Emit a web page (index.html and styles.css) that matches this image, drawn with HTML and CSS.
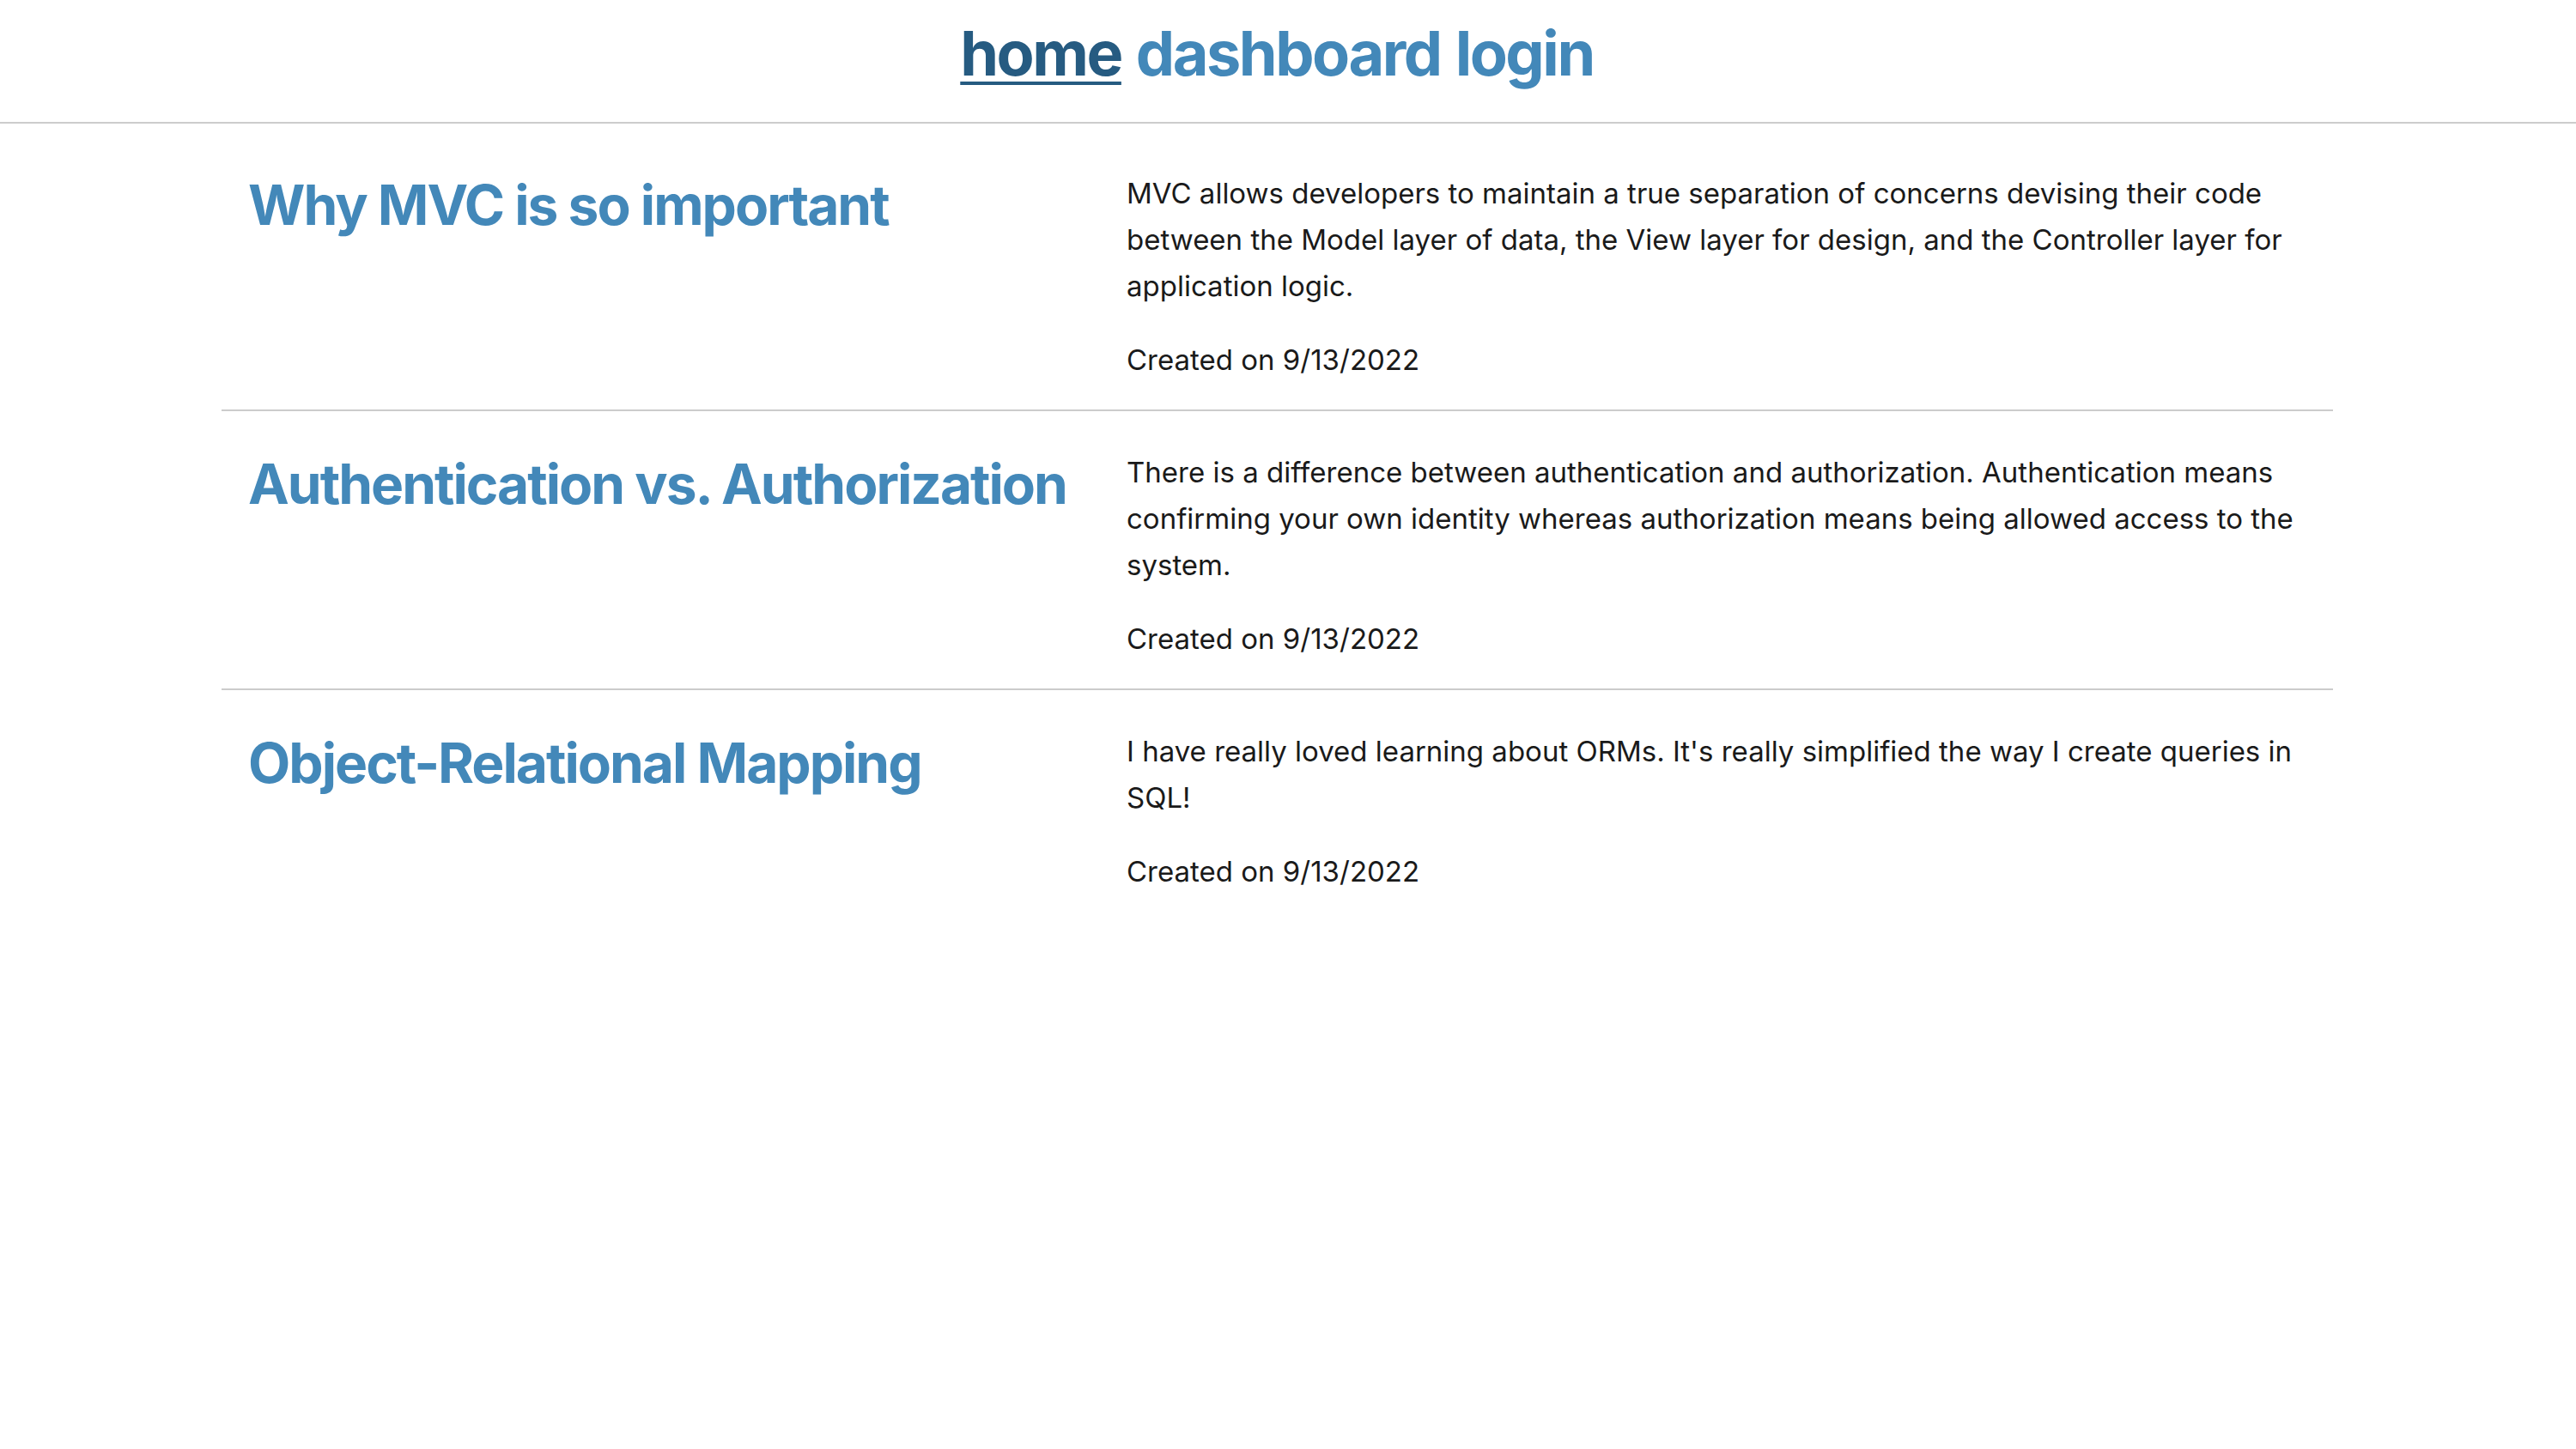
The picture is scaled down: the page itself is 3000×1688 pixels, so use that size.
FILE: index.html
```html
<!DOCTYPE html>
<html lang="en">
<head>
<meta charset="utf-8">
<title>Tech Blog</title>
<link rel="stylesheet" href="styles.css">
</head>
<body>
<header class="site-header">
  <nav class="nav">
    <a class="nav-link active" href="#">home</a>
    <a class="nav-link" href="#">dashboard</a>
    <a class="nav-link" href="#">login</a>
  </nav>
</header>
<main class="posts">
  <article class="post">
    <h2 class="post-title">Why MVC is so important</h2>
    <div class="post-body">
      <p>MVC allows developers to maintain a true separation of concerns devising their code between the Model layer of data, the View layer for design, and the Controller layer for application logic.</p>
      <p>Created on 9/13/2022</p>
    </div>
  </article>
  <article class="post">
    <h2 class="post-title">Authentication vs. Authorization</h2>
    <div class="post-body">
      <p>There is a difference between authentication and authorization. Authentication means confirming your own identity whereas authorization means being allowed access to the system.</p>
      <p>Created on 9/13/2022</p>
    </div>
  </article>
  <article class="post">
    <h2 class="post-title">Object-Relational Mapping</h2>
    <div class="post-body">
      <p>I have really loved learning about ORMs. It's really simplified the way I create queries in SQL!</p>
      <p>Created on 9/13/2022</p>
    </div>
  </article>
</main>
</body>
</html>
```
FILE: styles.css
```css
* { box-sizing: border-box; }

html, body {
  margin: 0;
  padding: 0;
  background: #ffffff;
}

body {
  font-family: Inter, "Noto Sans", "Liberation Sans", sans-serif;
  color: #1a1a1a;
}

.site-header {
  border-bottom: 2px solid #cccccc;
  padding: 19px 26px 37px 0;
}

.nav {
  display: flex;
  justify-content: center;
  gap: 17px;
  font-size: 72px;
  font-weight: 700;
  line-height: 1.2;
  letter-spacing: -2.5px;
}

.nav-link {
  color: #4388b9;
  text-decoration: none;
}

.nav-link.active {
  color: #265b81;
  text-decoration: underline;
  text-decoration-thickness: 4px;
  text-underline-offset: 7px;
}

.posts {
  margin: 0 283px 0 258px;
  padding-top: 10px;
}

.post {
  display: grid;
  grid-template-columns: 1023px 1fr;
  align-items: start;
  padding: 12px 31px 0 31px;
  border-bottom: 2px solid #cccccc;
}

.post:last-child {
  border-bottom: none;
}

.post-title {
  margin: 35px 0 0 0;
  font-size: 64px;
  font-weight: 700;
  line-height: 1.2;
  color: #4388b9;
  letter-spacing: -2px;
}

.post-body p {
  margin: 32px 0;
  font-size: 33px;
  line-height: 54px;
}

.post-body p:last-child {
  margin-bottom: 31px;
}
```
